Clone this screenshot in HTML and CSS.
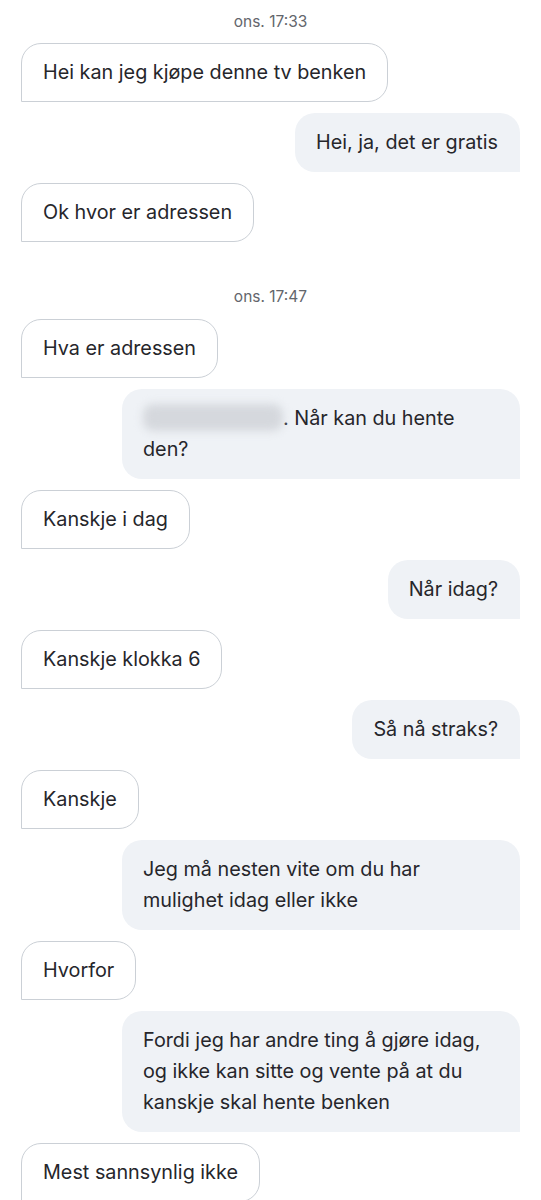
FILE: index.html
```html
<!DOCTYPE html>
<html lang="no">
<head>
  <meta charset="UTF-8">
  <title>Meldinger</title>
  <link rel="stylesheet" href="styles.css">
</head>
<body>

  <div class="chat">
    <div class="stamp first">ons. 17:33</div>
    <div class="msg in">Hei kan jeg kjøpe denne tv benken</div>
    <div class="msg out">Hei, ja, det er gratis</div>
    <div class="msg in">Ok hvor er adressen</div>

    <div class="stamp">ons. 17:47</div>
    <div class="msg in">Hva er adressen</div>
    <div class="msg out"><span class="hidden-text"></span>. Når kan du hente den?</div>
    <div class="msg in">Kanskje i dag</div>
    <div class="msg out">Når idag?</div>
    <div class="msg in">Kanskje klokka 6</div>
    <div class="msg out">Så nå straks?</div>
    <div class="msg in">Kanskje</div>
    <div class="msg out">Jeg må nesten vite om du har mulighet idag eller ikke</div>
    <div class="msg in">Hvorfor</div>
    <div class="msg out">Fordi jeg har andre ting å gjøre idag, og ikke kan sitte og vente på at du kanskje skal hente benken</div>
    <div class="msg in">Mest sannsynlig ikke</div>
  </div>

</body>
</html>
```

FILE: styles.css
```css
body {
  margin: 0;
  background: #fff;
  font-family: Inter, 'Noto Sans', sans-serif;
  color: #26262b;
  overflow: hidden;
}

.chat {
  display: flex;
  flex-direction: column;
  gap: 11px;
  padding: 0 21px;
}

.stamp {
  align-self: center;
  font-size: 15.5px;
  color: #63666c;
  line-height: 20px;
  margin-top: 34px;
  margin-bottom: 1px;
}

.stamp.first {
  margin-top: 12px;
  margin-bottom: 0;
}

.msg {
  font-size: 19.8px;
  line-height: 31px;
  padding: 14px 22px;
  border-radius: 20px;
}

.msg.in {
  align-self: flex-start;
  background: #fff;
  border: 1px solid #cbd0d6;
  border-bottom-left-radius: 0;
  padding: 13px 21px;
}

.msg.out {
  align-self: flex-end;
  background: #eff2f6;
  border-bottom-right-radius: 0;
  padding-left: 21px;
  max-width: 355px;
}

.hidden-text {
  display: inline-block;
  width: 140px;
  height: 27px;
  vertical-align: -6px;
  background: #d5d8dd;
  border-radius: 10px;
  filter: blur(4px);
}
```
